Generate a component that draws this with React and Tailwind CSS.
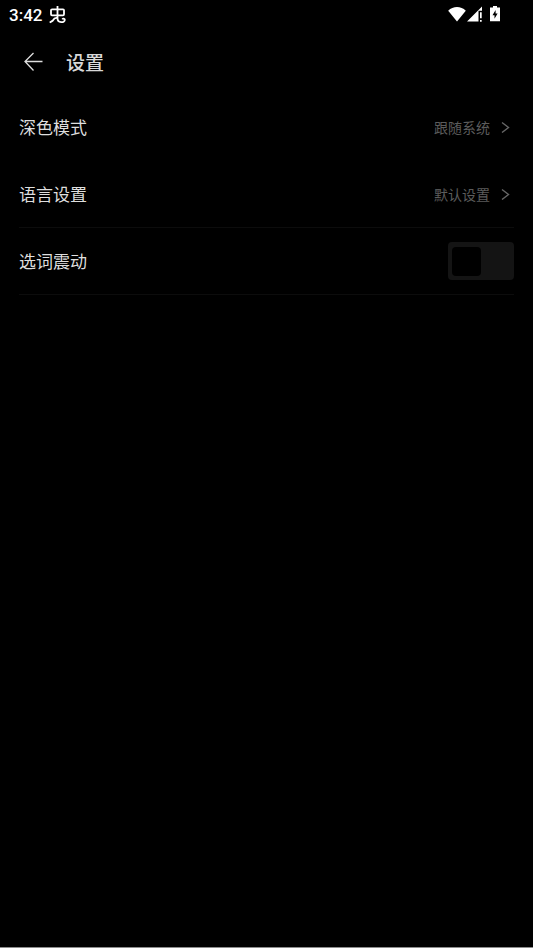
import { useState } from "react";

function StatusBar() {
  return (
    <div className="flex h-[30px] items-center justify-between pl-[9px] pr-8 text-white">
      <div className="flex items-center gap-[7px]">
        <span className="font-[Roboto,sans-serif] text-[17px] font-medium leading-5">3:42</span>
        <svg className="h-[18px] w-[17px]" viewBox="0 0 17 18" fill="none" stroke="currentColor" strokeWidth="1.8" aria-hidden="true">
          <rect x="2" y="3.300" width="13" height="6" rx="1" />
          <path d="M8.500 0V12.500C8.500 17 15.800 17.400 15.800 13.800C15.800 12.400 14 12.200 13.300 13.400" />
          <path d="M8 12C5.500 11.600 4.800 12.800 4.200 14C3.500 15.300 2.200 15.200 0.800 16.600" />
        </svg>
      </div>
      <div className="flex items-center">
        {/* Wifi */}
        <svg className="h-[18px] w-[18px]" viewBox="0 0 18 18" fill="currentColor" aria-hidden="true">
          <path d="M0.200 4.700C5 -0.200 13 -0.200 17.800 4.700L9 15.500z" />
        </svg>
        {/* Mobile signal, no data */}
        <svg className="ml-px h-[18px] w-[17px]" viewBox="0 0 17 18" fill="currentColor" aria-hidden="true">
          <path d="M0 15.600L15 0.600V4.800H11.500V15.600z" />
          <path d="M13 6.200h1.700v6H13zM13 14h1.700v1.700H13z" />
        </svg>
        {/* Battery charging */}
        <svg className="ml-[5px] h-[18px] w-3" viewBox="0 0 12 18" fill="currentColor" aria-hidden="true">
          <path d="M4 0h4v1.500h3V15.300H1V1.500h3z" />
          <path d="M6.600 4L3.500 9.300h2V12.700L8.600 7.500H6.600z" fill="#000" />
        </svg>
      </div>
    </div>
  );
}

function LinkRow({ label, value, divider }) {
  return (
    <button
      type="button"
      className={`flex h-[67px] w-full items-center border-b text-left ${divider ? "border-[#0c0c0c]" : "border-transparent"}`}
    >
      <span className="flex-1 text-[17px] leading-6 text-[#dedede]">{label}</span>
      <span className="text-sm leading-5 text-[#5c5c5c]">{value}</span>
      <svg className="ml-[10px] mr-1 h-3 w-[10px]" viewBox="0 0 10 12" fill="none" stroke="#666" strokeWidth="1.4" aria-hidden="true">
        <path d="M2 1.500L8.500 6.500L2 11.500" />
      </svg>
    </button>
  );
}

function SwitchRow({ label, checked, onChange }) {
  return (
    <label className="flex h-[67px] items-center justify-between border-b border-[#0c0c0c]">
      <span className="text-[17px] leading-6 text-[#dedede]">{label}</span>
      <input
        type="checkbox"
        role="switch"
        checked={checked}
        onChange={(e) => onChange(e.target.checked)}
        className="flex h-[38px] w-[66px] appearance-none items-center rounded bg-[#141414] px-1 before:size-[29px] before:rounded-sm before:bg-black before:content-[''] checked:justify-end checked:bg-[#3a3a3a]"
      />
    </label>
  );
}

export default function App() {
  const [vibrate, setVibrate] = useState(false);

  return (
    <div className="min-h-screen border-b border-[#8c8c8c] bg-black font-['Noto_Sans_CJK_SC',sans-serif]">
      <StatusBar />
      <header className="flex h-16 items-center gap-[23px] px-6">
        <button type="button" aria-label="返回">
          <svg className="h-5 w-[19px]" viewBox="0 0 19 20" fill="none" stroke="#dedede" strokeWidth="1.3" aria-hidden="true">
            <path d="M9.500 1L1 9.500L9.500 18.500M1 9.500H18.500" />
          </svg>
        </button>
        <h1 className="text-[19px] font-medium leading-6 text-[#d8d8d8]">设置</h1>
      </header>
      <main className="px-[19px]">
        <LinkRow label="深色模式" value="跟随系统" />
        <LinkRow label="语言设置" value="默认设置" divider />
        <SwitchRow label="选词震动" checked={vibrate} onChange={setVibrate} />
      </main>
    </div>
  );
}
